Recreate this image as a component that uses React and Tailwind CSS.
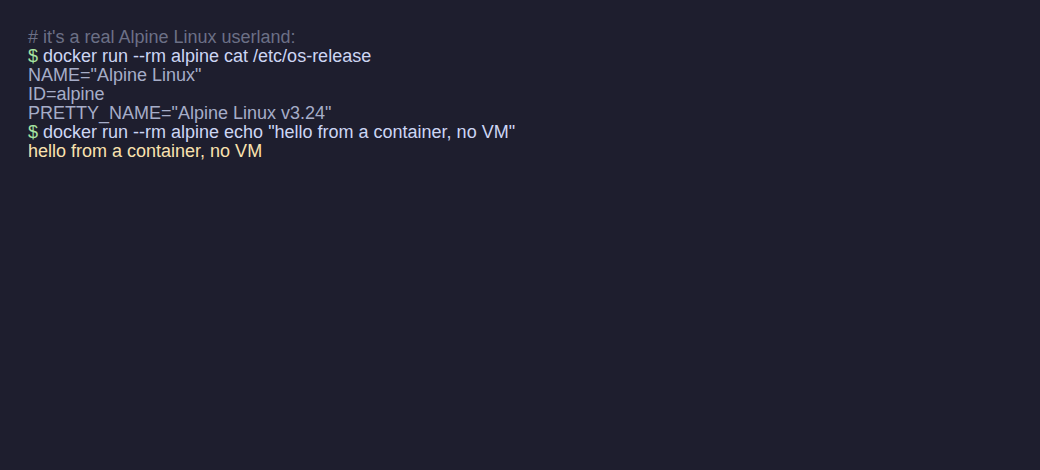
const lines = [
  { kind: 'comment', text: "# it's a real Alpine Linux userland:" },
  { kind: 'cmd', text: 'docker run --rm alpine cat /etc/os-release' },
  { kind: 'out', text: 'NAME="Alpine Linux"' },
  { kind: 'out', text: 'ID=alpine' },
  { kind: 'out', text: 'PRETTY_NAME="Alpine Linux v3.24"' },
  { kind: 'cmd', text: 'docker run --rm alpine echo "hello from a container, no VM"' },
  { kind: 'result', text: 'hello from a container, no VM' },
]

function Line({ kind, text }) {
  if (kind === 'cmd') {
    return (
      <div className="text-[#cdd6f4]">
        <span className="text-[#a6e3a1]">$</span> {text}
      </div>
    )
  }
  const color =
    kind === 'comment' ? 'text-[#6c7086]' : kind === 'result' ? 'text-[#f9e2af]' : 'text-[#a6adc8]'
  return <div className={color}>{text}</div>
}

export default function App() {
  return (
    <div className="h-[470px] w-full bg-[#1e1e2e] px-7 pt-7 font-['Liberation_Sans',Arial,sans-serif] text-[18px] leading-[19px] whitespace-pre">
      {lines.map((l, i) => (
        <Line key={i} {...l} />
      ))}
    </div>
  )
}
